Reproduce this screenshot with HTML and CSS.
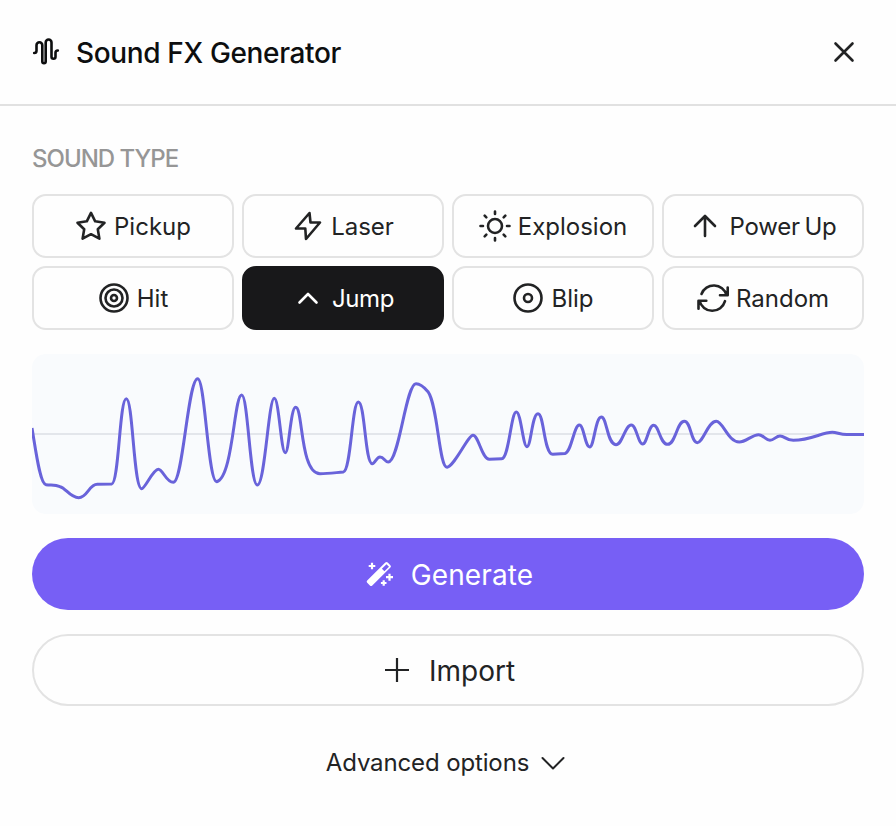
FILE: index.html
```html
<!DOCTYPE html>
<html lang="en">
<head>
<meta charset="utf-8">
<title>Sound FX Generator</title>
<link rel="stylesheet" href="styles.css">
</head>
<body>
<header class="header">
  <svg class="header-icon" width="28" height="28" viewBox="0 0 28 28"><path d="M2.200 15c1.500 0 2.300-.7 2.300-2.200V7.200a2.900 2.900 0 0 1 5.800 0v16.300a1.700 1.700 0 0 0 3.400 0V4.400a2.900 2.900 0 0 1 5.800 0v14.300a2 2 0 0 0 4 0V14.700c0-1.500.8-2.200 2.300-2.200"/></svg>
  <h1 class="title">Sound FX Generator</h1>
  <button class="close" aria-label="Close"><svg width="32" height="32" viewBox="0 0 32 32"><path d="M7.500 7.500l17 17M24.500 7.500l-17 17"/></svg></button>
</header>
<main class="content">
  <h2 class="label">SOUND TYPE</h2>
  <div class="types">
    <button class="type"><svg class="icon" viewBox="0 0 32 32"><path d="M16 2.800l4.200 8.500 9.300 1.400-6.700 6.600 1.600 9.300-8.400-4.400-8.400 4.400 1.600-9.300-6.700-6.600 9.300-1.400z"/></svg><span class="text">Pickup</span></button>
    <button class="type"><svg class="icon" viewBox="0 0 32 32"><path d="M17.500 3L4 18.500h9.300L14 29l14-16.500h-9.500z"/></svg><span class="text">Laser</span></button>
    <button class="type"><svg class="icon" viewBox="0 0 32 32"><circle cx="16" cy="16" r="7"/><path d="M16 1.500v2.500M16 28v2.500M1.500 16H4M28 16h2.500M5.700 5.700l1.600 1.600M24.700 24.700l1.600 1.600M5.700 26.300l1.600-1.600M24.700 7.300l1.600-1.600"/></svg><span class="text">Explosion</span></button>
    <button class="type"><svg class="icon" viewBox="0 0 32 32"><path d="M16 26V6.500M6 16L16 6l10 10"/></svg><span class="text power">Power Up</span></button>
    <button class="type"><svg class="icon" viewBox="0 0 32 32"><circle cx="16" cy="16" r="13.500"/><circle cx="16" cy="16" r="8.500"/><circle cx="16" cy="16" r="3"/></svg><span class="text">Hit</span></button>
    <button class="type active"><svg class="icon" viewBox="0 0 32 32"><path d="M7.500 20.500L16 12l8.500 8.500"/></svg><span class="text jump">Jump</span></button>
    <button class="type"><svg class="icon" viewBox="0 0 32 32"><circle cx="16" cy="16" r="13.500"/><circle cx="16" cy="16" r="4"/></svg><span class="text">Blip</span></button>
    <button class="type"><svg class="icon" viewBox="0 0 32 32"><path d="M4.500 12A13.200 13.200 0 0 1 29.500 13M30.700 5.500V13.200H23M28 19.200A13.200 13.200 0 0 1 2.500 18.800M1.500 26.700V18.800H9.300"/></svg><span class="text">Random</span></button>
  </div>
  <svg class="wave" viewBox="0 0 832 160">
    <path class="axis" d="M0 80H832"/>
    <path class="signal" d="M0 74C4 98 8 130 14 130.700C19 131.500 23 130.500 28 132.700C34 134 38 143.700 46.700 143.700S57 130.300 65.300 130.300L79.700 130C87 129 87.500 44.700 94.300 44.700C101 44.700 101.500 134.700 109.700 134.700C113 134.700 121 115.300 126.300 115.300C131 115.300 134 128.300 141.300 128.300C151 128.300 156 24.700 165.700 24.700C173 24.700 176 127.700 184.700 127.700C201 124 202 41 209.700 41C216 41 218 131 225.300 131C233 131 236.500 44.300 242.300 44.300C247 44.300 249 98.700 253.300 98.700C257 98.700 258.500 53.300 263.700 53.300C271 53.300 268 119.700 288 119.700C296 119.700 303 118.700 311.300 118C319 117 320 48 326.300 48C333 48 333 109.700 340.300 109.700C343 109.700 344.500 103 348 103C352 103 353 108 356.300 108C367 108 374 29.700 384 29.700C388 29.700 392.500 33.500 396 37.700C406 52 407 113.300 415 113.300C423 111.500 436 81.300 441 81.300C446.500 81.300 450 105.300 457.300 105.300L469.700 104.700C477 104.500 479 58 484.300 58C489 58 491 92.700 495 92.700C499 92.700 500 59.700 506 59.700C512 59.700 512 100.300 520.700 100.300L533 99.500C539.500 98 542 71 547.300 71C552 71 553 93 557.700 93C562 93 563.500 63 569.300 63C575 63 575 90.700 584 90.700C590.500 90.700 593 71 599.300 71C604.500 71 606 90 610.700 90C615 90 616.500 71.300 621.700 71.300C627 71.300 628 90.300 635.700 90.300C643.500 90.300 645 67.300 652.300 67.300C659 67.300 659 88.700 665.300 88.700C671 88.700 676 67.300 684.300 67.300C691 67.300 696 88 707.300 88C714 88 720 80.700 726.700 80.700C731 80.700 734 86.300 738 86.300C742 86.300 744 82 748 82C753 82 754 86.300 761.300 86.300C779 86.300 790 78.300 800.300 78.300C805 78.300 808 80.500 814.700 80.500H832"/>
  </svg>
  <button class="pill generate"><svg width="32" height="32" viewBox="0 0 32 32"><path class="wand" fill-rule="evenodd" d="M22.300 4.500q1.200-1.200 2.400 0l2.700 2.700q1.200 1.200 0 2.400L9.300 27.500q-1.200 1.200-2.400 0l-2.700-2.700q-1.200-1.200 0-2.400zM23.500 6.200L18.900 10.800l2.500 2.500 4.600-4.600z"/><path d="M9 4.700v6.600M5.700 8h6.600M26.500 15.700v7M23 19.200h7M20.700 22.200v5.600M17.900 25h5.600"/></svg><span class="text generate-text">Generate</span></button>
  <button class="pill import"><svg width="32" height="32" viewBox="0 0 32 32"><path d="M16 4v24M4 16h24"/></svg><span class="text">Import</span></button>
  <button class="advanced"><span class="advanced-text">Advanced options</span><svg width="24" height="24" viewBox="0 0 24 24"><path d="M1.500 7L12 17.500 22.500 7"/></svg></button>
</main>
</body>
</html>
```
FILE: styles.css
```css
* { box-sizing: border-box; }
body { margin: 0; min-height: 826px; background: #fefefe; color: #222324; font-family: Inter, sans-serif; }
button { font: inherit; color: inherit; padding: 0; background: none; border: 0; white-space: nowrap; }
svg { display: block; flex: none; fill: none; stroke: currentColor; stroke-width: 2.600; stroke-linecap: round; stroke-linejoin: round; }
.header { height: 106px; padding: 0 36px 0 32px; display: flex; align-items: center; border-bottom: 2px solid #e1e1e1; color: #0d0e0f; }
.header-icon { stroke-width: 2.600; }
.title { margin: 2px 0 0 16px; font-size: 28px; line-height: 36px; font-weight: 500; letter-spacing: -.35px; }
.close { margin-left: auto; color: #222324; }
.content { padding: 36px 32px 0; display: flex; flex-direction: column; }
.label { margin: 0; font-size: 24px; line-height: 34px; font-weight: 450; color: #969696; letter-spacing: -1px; }
.types { margin-top: 18px; display: grid; grid-template-columns: repeat(4, 202px); grid-auto-rows: 64px; gap: 8px; }
.type { display: flex; align-items: center; justify-content: center; gap: 7px; border: 2px solid #e3e3e3; border-radius: 14px; font-size: 24px; line-height: 32px; }
.type.active { background: #18181a; border-color: #18181a; color: #fff; }
.text { padding-top: 2px; }
.power { margin-left: 1px; letter-spacing: -.2px; word-spacing: -2px; }
.jump { margin-left: 1px; letter-spacing: -.4px; }
.icon { width: 32px; height: 32px; }
.wave { margin-top: 24px; width: 832px; height: 160px; border-radius: 14px; background: #f9fbfd; }
.axis { stroke: #e3e6eb; stroke-width: 2; }
.signal { stroke: #6963da; stroke-width: 3; stroke-linecap: butt; }
.pill { height: 72px; border-radius: 36px; display: flex; align-items: center; justify-content: center; gap: 16px; font-size: 28px; line-height: 36px; }
.generate { margin-top: 24px; background: #775ff5; color: #fff; }
.generate svg { stroke-width: 2.200; stroke-linecap: butt; }
.generate-text { letter-spacing: .1px; }
.wand { fill: currentColor; stroke: none; }
.import { margin-top: 24px; border: 2px solid #e3e3e3; }
.import svg { stroke-width: 2.200; stroke-linecap: butt; }
.advanced { margin-top: 40px; padding-right: 5px; display: flex; align-items: center; justify-content: center; gap: 12px; font-size: 24px; line-height: 34px; }
.advanced-text { letter-spacing: -.13px; }
.advanced svg { stroke-width: 2; }
```
